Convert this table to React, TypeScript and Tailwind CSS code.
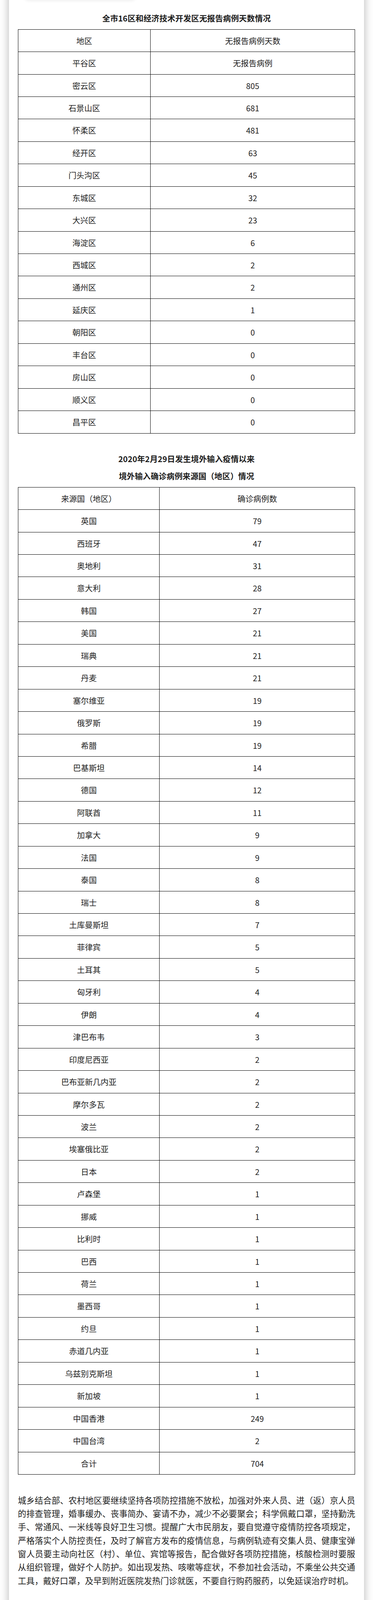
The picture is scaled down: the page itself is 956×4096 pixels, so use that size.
import React from "react";

// Two statistics tables from a news article, followed by a public notice paragraph.

const districtRows: [string, string][] = [
  ["平谷区", "无报告病例"],
  ["密云区", "805"],
  ["石景山区", "681"],
  ["怀柔区", "481"],
  ["经开区", "63"],
  ["门头沟区", "45"],
  ["东城区", "32"],
  ["大兴区", "23"],
  ["海淀区", "6"],
  ["西城区", "2"],
  ["通州区", "2"],
  ["延庆区", "1"],
  ["朝阳区", "0"],
  ["丰台区", "0"],
  ["房山区", "0"],
  ["顺义区", "0"],
  ["昌平区", "0"],
];

const importedRows: [string, string][] = [
  ["英国", "79"],
  ["西班牙", "47"],
  ["奥地利", "31"],
  ["意大利", "28"],
  ["韩国", "27"],
  ["美国", "21"],
  ["瑞典", "21"],
  ["丹麦", "21"],
  ["塞尔维亚", "19"],
  ["俄罗斯", "19"],
  ["希腊", "19"],
  ["巴基斯坦", "14"],
  ["德国", "12"],
  ["阿联酋", "11"],
  ["加拿大", "9"],
  ["法国", "9"],
  ["泰国", "8"],
  ["瑞士", "8"],
  ["土库曼斯坦", "7"],
  ["菲律宾", "5"],
  ["土耳其", "5"],
  ["匈牙利", "4"],
  ["伊朗", "4"],
  ["津巴布韦", "3"],
  ["印度尼西亚", "2"],
  ["巴布亚新几内亚", "2"],
  ["摩尔多瓦", "2"],
  ["波兰", "2"],
  ["埃塞俄比亚", "2"],
  ["日本", "2"],
  ["卢森堡", "1"],
  ["挪威", "1"],
  ["比利时", "1"],
  ["巴西", "1"],
  ["荷兰", "1"],
  ["墨西哥", "1"],
  ["约旦", "1"],
  ["赤道几内亚", "1"],
  ["乌兹别克斯坦", "1"],
  ["新加坡", "1"],
  ["中国香港", "249"],
  ["中国台湾", "2"],
  ["合计", "704"],
];

function DataTable({
  head,
  rows,
  firstCol,
}: {
  head: [string, string];
  rows: [string, string][];
  firstCol: string;
}) {
  const all = [head, ...rows];
  return (
    <div className="border-x border-b border-black">
      {all.map(([a, b], i) => (
        <div key={i} className="flex h-[57.44px] border-t border-black">
          <div className={`${firstCol} flex shrink-0 items-center justify-center border-r border-black`}>
            {a}
          </div>
          <div className="flex flex-1 items-center justify-center">{b}</div>
        </div>
      ))}
    </div>
  );
}

export default function App() {
  return (
    <div
      className="relative h-[4096px] overflow-hidden bg-white text-[20.3px] text-[#222]"
      style={{ fontFamily: '"Noto Sans CJK SC", "Noto Sans", sans-serif' }}
    >
      {/* faint shadow of the element above the crop */}
      <div className="absolute left-[60px] top-[-30px] h-[30px] w-[290px] rounded-full bg-white shadow-[0_2px_8px_rgba(0,0,0,0.07)]" />

      <div className="mx-[22.8px] -mt-[40px] min-h-[4200px] bg-white px-[23px] pt-[70.95px] shadow-[0_0_20px_2px_rgba(0,0,0,0.26)]">
        <h2 className="mb-[13.7px] h-[30px] text-center text-[20.4px] font-bold leading-[30px] text-[#1c1c1c]">
          全市16区和经济技术开发区无报告病例天数情况
        </h2>

        <DataTable head={["地区", "无报告病例天数"]} rows={districtRows} firstCol="w-[339.3px]" />

        <h2 className="mb-[5.75px] mt-[42.05px] text-center text-[20.4px] font-bold leading-[44.7px] text-[#1c1c1c]">
          2020年2月29日发生境外输入疫情以来
          <br />
          境外输入确诊病例来源国（地区）情况
        </h2>

        <DataTable head={["来源国（地区）", "确诊病例数"]} rows={importedRows} firstCol="w-[362.7px]" />

        <p className="mt-[47.6px] text-justify text-[21.5px] leading-[34.36px]">
          城乡结合部、农村地区要继续坚持各项防控措施不放松，加强对外来人员、进（返）京人员的排查管理，婚事缓办、丧事简办、宴请不办，减少不必要聚会；科学佩戴口罩，坚持勤洗手、常通风、一米线等良好卫生习惯。提醒广大市民朋友，要自觉遵守疫情防控各项规定，严格落实个人防控责任，及时了解官方发布的疫情信息，与病例轨迹有交集人员、健康宝弹窗人员要主动向社区（村）、单位、宾馆等报告，配合做好各项防控措施，核酸检测时要服从组织管理，做好个人防护。如出现发热、咳嗽等症状，不参加社会活动，不乘坐公共交通工具，戴好口罩，及早到附近医院发热门诊就医，不要自行购药服药，以免延误治疗时机。
        </p>
      </div>
    </div>
  );
}
